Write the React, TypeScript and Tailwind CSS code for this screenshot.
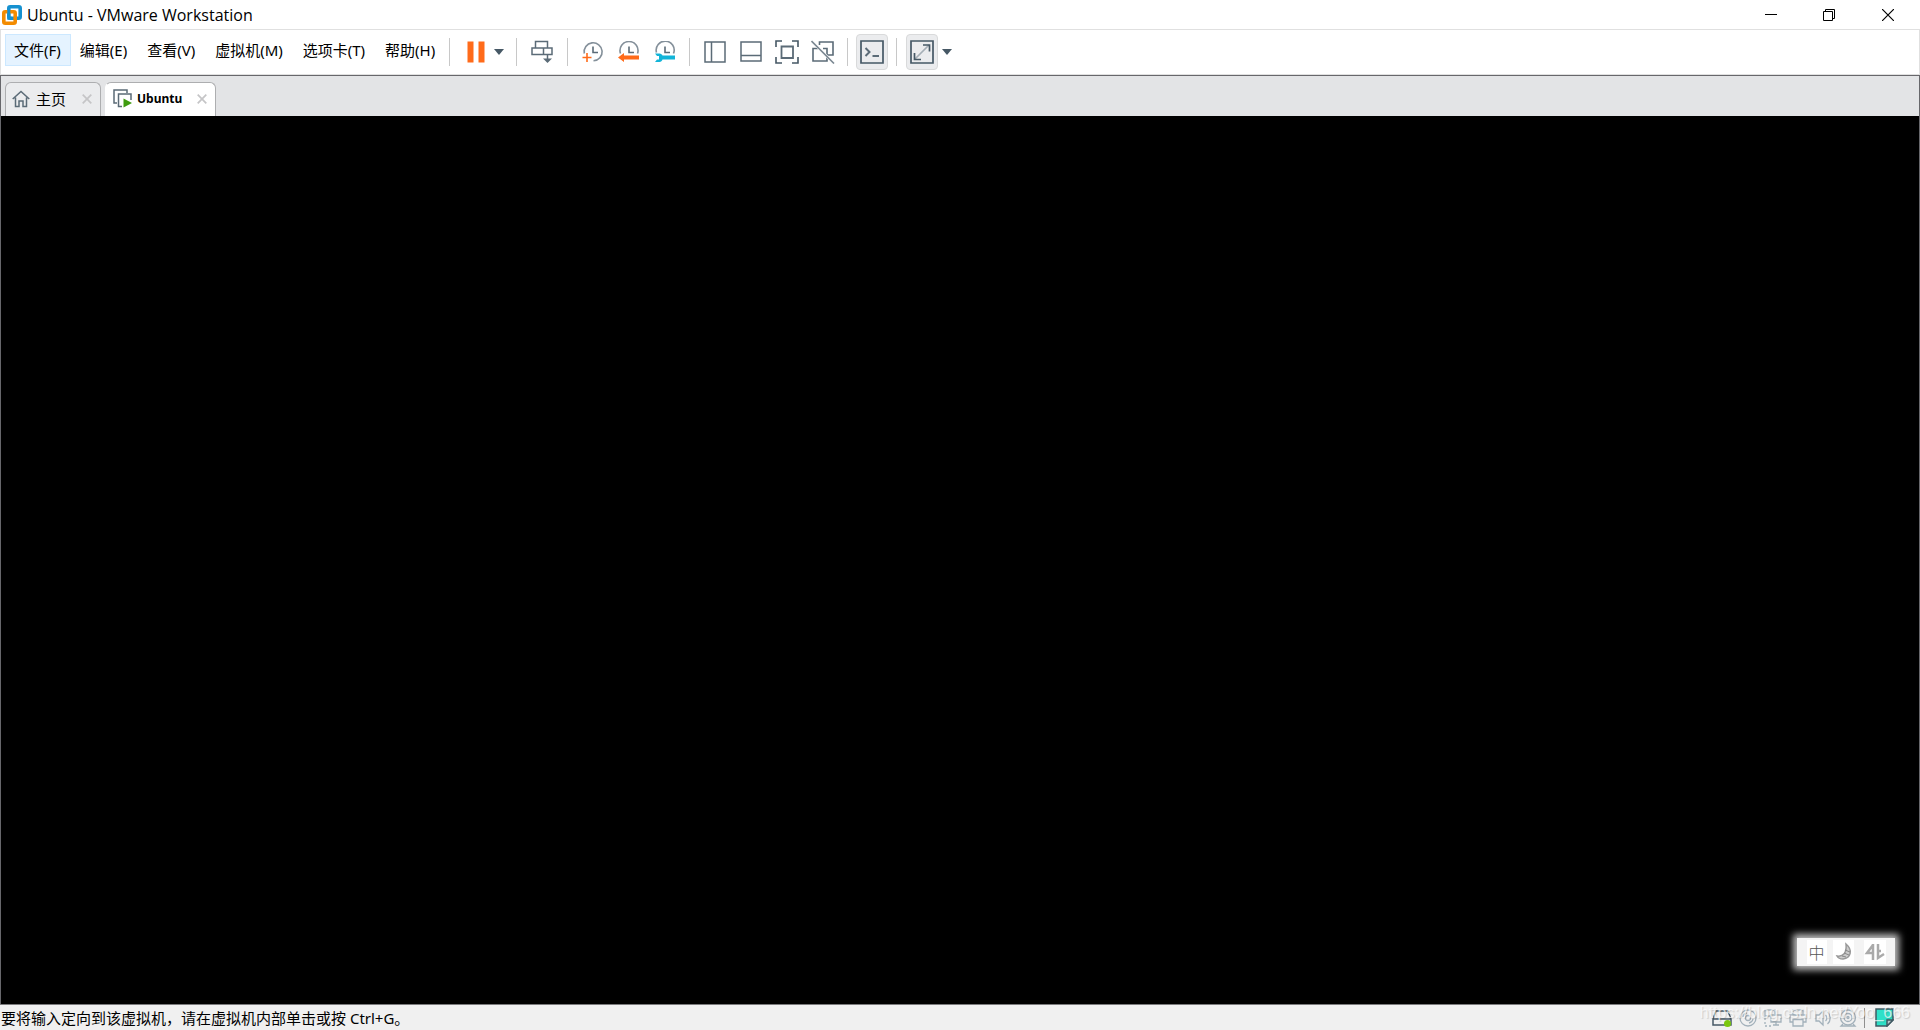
import type { ReactNode } from "react";

const ink = "#5b6b77";
const dark = "#465865";
const pale = "#a3b1bb";

function Logo() {
  return (
    <svg width="20" height="20" viewBox="0 0 20 20" fill="none" aria-hidden>
      <rect x="6.8" y="1.8" width="11.4" height="11.4" rx="1.5" stroke="#1691d0" strokeWidth="3.6" />
      <rect x="1.8" y="6.8" width="11.4" height="11.4" rx="1.5" stroke="#f38b00" strokeWidth="3.6" />
      <path d="M6.8 5v8.2H10" stroke="#1691d0" strokeWidth="3" />
    </svg>
  );
}

function Caret() {
  return (
    <svg width="10" height="6" viewBox="0 0 10 6" aria-hidden>
      <path d="M0 0h10L5 6z" fill={dark} />
    </svg>
  );
}

function PauseIcon() {
  return (
    <svg width="18" height="22" viewBox="0 0 18 22" aria-hidden>
      <path d="M.5.5h6v21h-6zM11.5.5h6v21h-6z" fill="#ff6b1a" />
    </svg>
  );
}

function SendKeysIcon() {
  return (
    <svg width="22" height="24" viewBox="0 0 22 24" fill="none" stroke={ink} strokeWidth="1.5" aria-hidden>
      <path d="M4.5 8V1.5h12V8M1 8h20v6.5H1zM12.5 8v6.5M16.5 14v8" />
      <path d="M12 18.5h9L16.5 23z" fill={ink} stroke="none" />
    </svg>
  );
}

function Clock({ arc, children }: { arc: string; children: ReactNode }) {
  return (
    <svg width="22" height="22" viewBox="0 0 22 22" fill="none" aria-hidden>
      <path d={arc} stroke="#84909a" strokeWidth="1.6" />
      <path d="M11 5.5v6h5" stroke={ink} strokeWidth="1.6" />
      {children}
    </svg>
  );
}

function SnapshotIcon() {
  return (
    <Clock arc="M2.3 12.5A9 9 0 1 1 11.5 19.8">
      <path d="M5 12v9M.5 16.5h9" stroke="#ff6b1a" strokeWidth="1.6" />
    </Clock>
  );
}

function RevertIcon() {
  return (
    <Clock arc="M2.5 12.5A9 9 0 1 1 19.5 12.5">
      <path d="M0 16.5L6 12v2.5h15v4H6V21z" fill="#ff6b1a" />
    </Clock>
  );
}

function SnapshotManagerIcon() {
  return (
    <Clock arc="M2.5 11.5A9 9 0 1 1 19.5 12.5">
      <path d="M1 12.5h4.5c1.5 0 2.5 1 3 2H21v4H8.500c-.5 1.5-1.5 2.5-3 2.5H1l2-2.500h2v-3.500H3z" fill="#12b4d8" />
    </Clock>
  );
}

function LibraryIcon() {
  return (
    <svg width="22" height="22" viewBox="0 0 22 22" fill="none" stroke={ink} strokeWidth="1.5" aria-hidden>
      <path d="M1 1h20v20H1zM7.5 1v20" />
    </svg>
  );
}

function ThumbnailIcon() {
  return (
    <svg width="22" height="22" viewBox="0 0 22 22" fill="none" stroke={ink} strokeWidth="1.5" aria-hidden>
      <path d="M1 1h20v19H1zM1 14.5h20" />
    </svg>
  );
}

function FullScreenIcon() {
  return (
    <svg width="24" height="24" viewBox="0 0 24 24" fill="none" aria-hidden>
      <path d="M1 7V1h6M17 1h6v6M23 17v6h-6M7 23H1v-6" stroke={dark} strokeWidth="1.6" />
      <path d="M6.5 6.5H18V18H6.5z" stroke={ink} strokeWidth="1.8" />
    </svg>
  );
}

function UnityIcon() {
  return (
    <svg width="24" height="24" viewBox="0 0 24 24" fill="none" stroke={ink} strokeWidth="1.6" aria-hidden>
      <path d="M8.5 5V2H22v13h-5.500M12 8.500h4V21H2V8.500h5" />
      <path d="M.5 1L23 23.5" stroke="#fff" strokeWidth="2.5" />
      <path d="M.5 1L23 23.5" stroke="#7a8791" />
    </svg>
  );
}

function ConsoleIcon() {
  return (
    <svg width="24" height="24" viewBox="0 0 24 24" fill="none" stroke={dark} strokeWidth="1.7" aria-hidden>
      <path d="M1 1h22v22H1z" />
      <path d="M5.5 8l4 4-4 4M12.5 16H19" stroke={ink} strokeWidth="2" />
    </svg>
  );
}

function StretchIcon() {
  return (
    <svg width="24" height="24" viewBox="0 0 24 24" fill="none" stroke={dark} strokeWidth="1.7" aria-hidden>
      <path d="M1 1h22v22H1z" />
      <path d="M19 5L5 19" stroke="#a5afb6" />
      <path d="M13 5h6.5v6.5M4.5 13v6.5H11" />
    </svg>
  );
}

function CloseIcon() {
  return (
    <svg width="10" height="10" viewBox="0 0 10 10" fill="none" stroke="#c5c5c7" strokeWidth="1.7" aria-hidden>
      <path d="M.7.7l8.6 8.6M9.3.7L.7 9.3" />
    </svg>
  );
}

function HomeIcon() {
  return (
    <svg width="18" height="18" viewBox="0 0 18 18" fill="none" stroke={ink} strokeWidth="1.5" aria-hidden>
      <path d="M.7 9L9 1.5 17.3 9M3.5 7.5v9H7V11h4v5.5h3.5v-9" />
    </svg>
  );
}

function MachineIcon() {
  return (
    <svg width="20" height="20" viewBox="0 0 20 20" fill="none" stroke={ink} strokeWidth="1.5" aria-hidden>
      <path d="M4 14H1V1h13v3M9 17.5H5.5V5H18v6" />
      <path d="M10.5 9.5l8.500 4.500-8.500 4.500z" fill="#3f9c0f" stroke="none" />
    </svg>
  );
}

const menus = ["文件(F)", "编辑(E)", "查看(V)", "虚拟机(M)", "选项卡(T)", "帮助(H)"];

function Separator() {
  return <span className="h-7 w-px shrink-0 bg-[#c8c8c8]" />;
}

function Tool({ label, active, children }: { label: string; active?: boolean; children: ReactNode }) {
  return (
    <button
      type="button"
      aria-label={label}
      className={
        active
          ? "flex h-9 w-8 items-center justify-center rounded border border-[#d9dadb] bg-[#ebecee]"
          : "flex h-9 w-6 items-center justify-center"
      }
    >
      {children}
    </button>
  );
}

function TitleBar() {
  return (
    <header className="flex h-[29px] shrink-0 items-center justify-between pr-0.5 pl-0.5">
      <div className="flex h-7 items-center gap-1">
        <Logo />
        <h1 className="pl-px font-['Open_Sans','Noto_Sans',sans-serif] text-base leading-7">Ubuntu - VMware Workstation</h1>
      </div>
      <div className="flex h-7">
        <button type="button" aria-label="最小化" className="flex w-[58px] items-center justify-center">
          <svg width="12" height="12" viewBox="0 0 12 12"><path d="M0 5h12v1H0z" /></svg>
        </button>
        <button type="button" aria-label="还原" className="flex w-[58px] items-center justify-center">
          <svg width="12" height="12" viewBox="0 0 12 12" fill="none" stroke="#000">
            <path d="M.5 2.5h9v9h-9zM2.5 2.5v-2h9v9h-2" />
          </svg>
        </button>
        <button type="button" aria-label="关闭" className="flex w-[60px] items-center justify-center">
          <svg width="12" height="12" viewBox="0 0 12 12" fill="none" stroke="#000" strokeWidth="1.2">
            <path d="M0 0l12 12M12 0L0 12" />
          </svg>
        </button>
      </div>
    </header>
  );
}

function Toolbar() {
  return (
    <div className="flex h-[46px] shrink-0 items-center border border-[#e0e0e0] pl-1">
      <nav className="flex pb-1">
        {menus.map((name, i) => (
          <button
            key={name}
            type="button"
            className={
              i === 0
                ? "h-8 border border-[#cce8ff] bg-[#e5f3ff] pr-[9px] pl-2 text-[15px] leading-7"
                : "h-8 border border-transparent pr-2.5 pl-2 text-[15px] leading-7"
            }
          >
            {name}
          </button>
        ))}
      </nav>
      <div className="flex items-center pl-[3px]">
        <Separator />
        <div className="flex items-center gap-1.5 pr-3 pl-3.5">
          <Tool label="挂起"><PauseIcon /></Tool>
          <button type="button" aria-label="电源选项"><Caret /></button>
        </div>
        <Separator />
        <div className="px-[13px]"><Tool label="发送 Ctrl+Alt+Del"><SendKeysIcon /></Tool></div>
        <Separator />
        <div className="flex gap-3 pr-3 pl-[13px]">
          <Tool label="拍摄快照"><SnapshotIcon /></Tool>
          <Tool label="恢复快照"><RevertIcon /></Tool>
          <Tool label="管理快照"><SnapshotManagerIcon /></Tool>
        </div>
        <Separator />
        <div className="flex gap-3 pr-3 pl-[13px]">
          <Tool label="显示库"><LibraryIcon /></Tool>
          <Tool label="缩略图栏"><ThumbnailIcon /></Tool>
          <Tool label="全屏"><FullScreenIcon /></Tool>
          <Tool label="Unity"><UnityIcon /></Tool>
        </div>
        <Separator />
        <div className="px-2"><Tool label="控制台视图" active><ConsoleIcon /></Tool></div>
        <Separator />
        <div className="flex items-center gap-1 pl-[9px]">
          <Tool label="自由拉伸" active><StretchIcon /></Tool>
          <button type="button" aria-label="拉伸选项"><Caret /></button>
        </div>
      </div>
    </div>
  );
}

function Tabs() {
  return (
    <div className="flex h-10 shrink-0 items-end gap-1 bg-[#e3e4e6] pl-1">
      <div className="flex h-[34px] w-24 items-center rounded-t-md border border-b-0 border-[#adaeb0] bg-[#ebecee] pb-0.5 pl-1.5">
        <button type="button" className="flex grow items-center gap-1.5 text-[15px] leading-5"><HomeIcon />主页</button>
        <button type="button" aria-label="关闭主页" className="pr-2"><CloseIcon /></button>
      </div>
      <div className="flex h-[34px] w-[111px] items-center rounded-t-md border border-b-0 border-[#adaeb0] border-l-white bg-white pb-0.5 pl-[7px]">
        <button type="button" className="flex grow items-center gap-1 text-xs leading-5 font-bold"><MachineIcon />Ubuntu</button>
        <button type="button" aria-label="关闭 Ubuntu" className="pr-2"><CloseIcon /></button>
      </div>
    </div>
  );
}

function InputMethod() {
  return (
    <div className="absolute right-6 bottom-[38px] flex h-7 w-[98px] items-center justify-center gap-1.5 bg-[#f4f4f4] shadow-[0_0_7px_4px_rgba(255,255,255,0.75)]">
      <span className="flex h-6 w-5 items-center justify-center bg-white font-['Noto_Sans_CJK_SC',sans-serif] text-base leading-6 font-light text-[#555]">中</span>
      <svg width="21" height="24" viewBox="0 0 21 24" className="bg-white" aria-hidden>
        <path d="M13 4c7 6 5 14-3 15-3 0-5-1-6-3 6 1 10-3 9-12z" fill="#ccc" stroke="#999" strokeWidth="1.5" />
        <path d="M12 10l5 2M11 13l5 2M9 16l4 1" stroke="#888" />
      </svg>
      <svg width="22" height="24" viewBox="0 0 22 24" fill="none" stroke="#aaa" strokeWidth="2.5" className="ml-1 bg-white" aria-hidden>
        <path d="M9 4v16M9 5l-6 8h5M14 4v14l6-4M13 11h4" />
      </svg>
    </div>
  );
}

function StatusBar() {
  return (
    <footer className="relative flex h-[26px] shrink-0 items-center justify-between border-t border-[#7b7b7d] bg-[#f0f0f0] pr-[26px] pl-px">
      <p className="text-[15px] leading-6">要将输入定向到该虚拟机，请在虚拟机内部单击或按 Ctrl+G。</p>
      <div className="flex items-center gap-[7px]" aria-hidden>
        <svg width="20" height="18" viewBox="0 0 20 18" fill="none" stroke={dark} strokeWidth="1.5">
          <path d="M1 10l3-8h12l3 8v6H1zM1 10h18" />
          <circle cx="15.5" cy="14.5" r="3.5" fill="#7ac70c" stroke="none" />
        </svg>
        <svg width="18" height="18" viewBox="0 0 18 18" fill="none" stroke={pale} strokeWidth="1.3">
          <circle cx="9" cy="9" r="8" />
          <circle cx="9" cy="9" r="2.5" />
          <path d="M4 8a5 5 0 0 1 4-4M14 10a5 5 0 0 1-4 4" />
        </svg>
        <svg width="18" height="18" viewBox="0 0 18 18" fill="none" stroke={pale} strokeWidth="1.3">
          <path d="M1 9V1h10v4M1 7h6M7 6h10v7H7zM12 13v3M9 16h6" />
          <path d="M1 9v8h6" strokeDasharray="2 2" />
        </svg>
        <svg width="18" height="18" viewBox="0 0 18 18" fill="none" stroke={pale} strokeWidth="1.3">
          <path d="M4 6V1h10v5M4 13H1V6h16v7h-3M4 10.5h10V17H4z" />
        </svg>
        <svg width="18" height="18" viewBox="0 0 18 18" fill="none" stroke={pale} strokeWidth="1.3">
          <path d="M2 6h3l4-4v14l-4-4H2zM11.5 6a4 4 0 0 1 0 6M13.5 3a8 8 0 0 1 0 12" />
        </svg>
        <svg width="18" height="18" viewBox="0 0 18 18" fill="none" stroke={pale} strokeWidth="1.3">
          <circle cx="9" cy="8.5" r="7.5" />
          <circle cx="9" cy="8.5" r="4" />
          <circle cx="9" cy="8.5" r="1" />
          <path d="M4 15l-2 2h14l-2-2" />
        </svg>
        <span className="mr-[3px] h-5 w-px bg-[#8f8f8f]" />
        <svg width="19" height="19" viewBox="0 0 19 19" stroke="#3f5963" strokeWidth="1.5">
          <path d="M1 1h17v11l-6 6H1z" fill="#2ee0c8" />
          <path d="M18 12h-6v6z" fill="#b9c6cb" />
        </svg>
      </div>
      <span className="pointer-events-none absolute top-0 right-2.5 font-['Liberation_Sans',sans-serif] text-base leading-4 text-white/70 [text-shadow:1px_1px_1px_rgba(0,0,0,0.15)]">
        https://blog.csdn.net/Yoo_666
      </span>
    </footer>
  );
}

export default function App() {
  return (
    <div className="flex h-screen min-h-80 flex-col overflow-hidden bg-white font-['Noto_Sans','Noto_Sans_CJK_SC',sans-serif] text-black">
      <TitleBar />
      <Toolbar />
      <main className="flex min-h-0 grow flex-col border border-b-0 border-[#67676b]">
        <Tabs />
        <section className="relative grow bg-black" aria-label="Ubuntu">
          <InputMethod />
        </section>
      </main>
      <StatusBar />
    </div>
  );
}
